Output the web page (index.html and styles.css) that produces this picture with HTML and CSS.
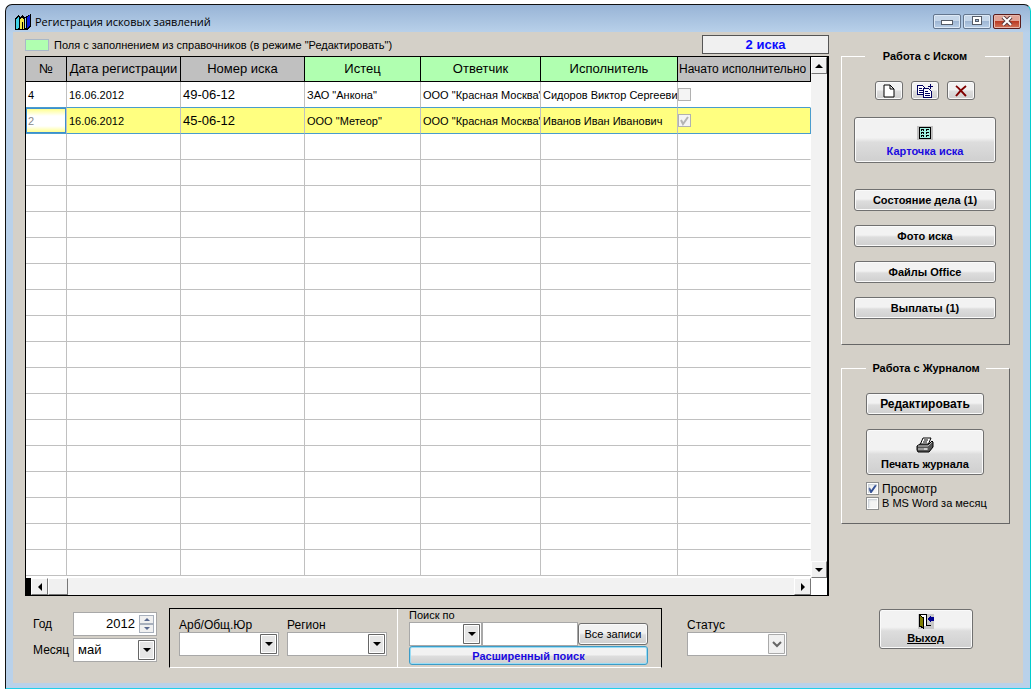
FILE: index.html
```
<!DOCTYPE html>
<html lang="ru">
<head>
  <meta charset="UTF-8">
  <meta name="viewport" content="width=device-width, initial-scale=1.0">
  <title>Регистрация исковых заявлений</title>
  <link rel="stylesheet" href="styles.css">
</head>
<body>
  <div class="window">
    <header class="titlebar">
      <svg class="app__icon" width="16" height="16" viewBox="0 0 16 16" shape-rendering="crispEdges">
        <path d="M0 5l3-4 3 2v13H0z" fill="#000"/>
        <path d="M1 5l2-2 1 1v10l-3 1z" fill="#3fd0e8"/>
        <path d="M4 5l3-4 3 3v12H4z" fill="#000"/>
        <path d="M5 6l2-3 2 3v9H8V8H7v7H5z" fill="#f4e84a"/>
        <path d="M10 3l6-3v12l-4 4h-2z" fill="#000"/>
        <path d="M12 3l3-2v11l-3 2z" fill="#0a1fe0"/>
        <path d="M10 4h1v10h-1z" fill="#9fd8f0"/>
      </svg>
      <h1 class="titlebar__text">Регистрация исковых заявлений</h1>
      <div class="titlebar__buttons">
        <button class="win__btn" type="button" aria-label="Свернуть">
          <svg width="12" height="10" viewBox="0 0 12 10"><rect x=".5" y="4.500" width="11" height="4" fill="#fff" stroke="#555c68"/></svg>
        </button>
        <button class="win__btn" type="button" aria-label="Развернуть">
          <svg width="12" height="10" viewBox="0 0 12 10"><rect x="1.500" y=".5" width="9" height="8" fill="#fff" stroke="#555c68"/><rect x="4.500" y="3.500" width="3" height="2" fill="#9db6d3" stroke="#555c68"/></svg>
        </button>
        <button class="win__btn win__btn--close" type="button" aria-label="Закрыть">
          <svg width="12" height="10" viewBox="0 0 12 10"><path d="M2 1l8 8M10 1l-8 8" stroke="#5b3c40" stroke-width="4"/><path d="M2 1l8 8M10 1l-8 8" stroke="#fff" stroke-width="2"/></svg>
        </button>
      </div>
    </header>

    <main class="client">
      <section class="journal">
        <div class="journal__top">
          <span class="swatch"></span>
          <p class="hint">Поля с заполнением из справочников (в режиме "Редактировать")</p>
          <output class="count">2 иска</output>
        </div>

        <div class="grid">
          <table class="claims">
            <colgroup>
              <col class="col-num"><col class="col-date"><col class="col-claim"><col class="col-plaintiff"><col class="col-defendant"><col class="col-executor"><col>
            </colgroup>
            <thead>
              <tr>
                <th>№</th>
                <th>Дата регистрации</th>
                <th>Номер иска</th>
                <th class="lookup">Истец</th>
                <th class="lookup">Ответчик</th>
                <th class="lookup">Исполнитель</th>
                <th class="started">Начато исполнительно</th>
              </tr>
            </thead>
            <tbody>
              <tr class="before">
                <td>4</td>
                <td>16.06.2012</td>
                <td class="big">49-06-12</td>
                <td>ЗАО "Анкона"</td>
                <td>ООО "Красная Москва"</td>
                <td>Сидоров Виктор Сергееви</td>
                <td class="tick"><input class="check" type="checkbox" aria-label="Начато исполнительное, иск 4" disabled></td>
              </tr>
              <tr class="selected">
                <td class="current">2</td>
                <td>16.06.2012</td>
                <td class="big">45-06-12</td>
                <td>ООО "Метеор"</td>
                <td>ООО "Красная Москва"</td>
                <td>Иванов Иван Иванович</td>
                <td class="tick"><input class="check" type="checkbox" aria-label="Начато исполнительное, иск 2" checked disabled></td>
              </tr>
              <tr><td></td><td></td><td></td><td></td><td></td><td></td><td></td></tr>
              <tr><td></td><td></td><td></td><td></td><td></td><td></td><td></td></tr>
              <tr><td></td><td></td><td></td><td></td><td></td><td></td><td></td></tr>
              <tr><td></td><td></td><td></td><td></td><td></td><td></td><td></td></tr>
              <tr><td></td><td></td><td></td><td></td><td></td><td></td><td></td></tr>
              <tr><td></td><td></td><td></td><td></td><td></td><td></td><td></td></tr>
              <tr><td></td><td></td><td></td><td></td><td></td><td></td><td></td></tr>
              <tr><td></td><td></td><td></td><td></td><td></td><td></td><td></td></tr>
              <tr><td></td><td></td><td></td><td></td><td></td><td></td><td></td></tr>
              <tr><td></td><td></td><td></td><td></td><td></td><td></td><td></td></tr>
              <tr><td></td><td></td><td></td><td></td><td></td><td></td><td></td></tr>
              <tr><td></td><td></td><td></td><td></td><td></td><td></td><td></td></tr>
              <tr><td></td><td></td><td></td><td></td><td></td><td></td><td></td></tr>
              <tr><td></td><td></td><td></td><td></td><td></td><td></td><td></td></tr>
              <tr><td></td><td></td><td></td><td></td><td></td><td></td><td></td></tr>
              <tr><td></td><td></td><td></td><td></td><td></td><td></td><td></td></tr>
              <tr><td></td><td></td><td></td><td></td><td></td><td></td><td></td></tr>
            </tbody>
          </table>
          <div class="vscroll">
            <button class="scroll__btn" type="button" aria-label="Вверх"><svg width="8" height="4" viewBox="0 0 8 4"><path d="M0 4l4-4 4 4z"/></svg></button>
            <button class="scroll__btn" type="button" aria-label="Вниз"><svg width="8" height="4" viewBox="0 0 8 4"><path d="M0 0l4 4 4-4z"/></svg></button>
          </div>
          <div class="hscroll">
            <button class="scroll__btn" type="button" aria-label="Влево"><svg width="4" height="8" viewBox="0 0 4 8"><path d="M4 0L0 4l4 4z"/></svg></button>
            <span class="thumb"></span>
            <button class="scroll__btn scroll__btn--end" type="button" aria-label="Вправо"><svg width="4" height="8" viewBox="0 0 4 8"><path d="M0 0l4 4-4 4z"/></svg></button>
          </div>
        </div>

        <form class="filters">
          <div class="period">
            <label for="year">Год</label>
            <div class="spin">
              <input id="year" class="spin__input" type="text" value="2012">
              <div class="spin__buttons">
                <button type="button" aria-label="Больше"><svg width="6" height="3" viewBox="0 0 6 3"><path d="M0 3l3-3 3 3z"/></svg></button>
                <button type="button" aria-label="Меньше"><svg width="6" height="3" viewBox="0 0 6 3"><path d="M0 0l3 3 3-3z"/></svg></button>
              </div>
            </div>
            <label for="month">Месяц</label>
            <select id="month" class="select"><option>май</option></select>
          </div>

          <div class="panel">
            <div class="panel__part panel__part--court">
              <div class="field">
                <label for="court">Арб/Общ.Юр</label>
                <select id="court" class="select"><option></option></select>
              </div>
              <div class="field">
                <label for="region">Регион</label>
                <select id="region" class="select"><option></option></select>
              </div>
            </div>
            <div class="panel__part panel__part--search">
              <label class="small" for="search-by">Поиск по</label>
              <div class="search">
                <select id="search-by" class="select"><option></option></select>
                <input class="search__text" type="text" aria-label="Текст поиска">
                <button class="btn btn--plain" type="button">Все записи</button>
              </div>
              <button class="btn btn--advanced" type="button">Расширенный поиск</button>
            </div>
          </div>

          <div class="field status">
            <label for="status">Статус</label>
            <select id="status" class="select" disabled><option></option></select>
          </div>
        </form>
      </section>

      <aside class="side">
        <fieldset class="group group--claim">
          <legend>Работа с Иском</legend>
          <div class="tools">
            <button class="btn" type="button" aria-label="Новый иск">
              <svg width="12" height="14" viewBox="0 0 12 14"><path d="M1 1h6l4 4v8H1zM7 1v4h4" fill="#fff" stroke="#000"/></svg>
            </button>
            <button class="btn" type="button" aria-label="Копировать иск">
              <svg width="17" height="14" viewBox="0 0 17 14" shape-rendering="crispEdges">
                <path d="M.5 1.500h5l3 3v6h-8z" fill="#fff" stroke="#000060"/>
                <path d="M2 4.500h3M2 6.500h4M2 8.500h4" stroke="#000060"/>
                <path d="M6.500 4.500h5l3 3v6h-8z" fill="#fff" stroke="#000060"/>
                <path d="M8 7.500h3M8 9.500h5M8 11.500h5" stroke="#000060"/>
                <path d="M11 2.500h5M13.500 0v5" stroke="#000060"/>
              </svg>
            </button>
            <button class="btn" type="button" aria-label="Удалить иск">
              <svg width="12" height="12" viewBox="0 0 12 12"><path d="M1 1c3 2 6 6 10 10M11 1C7 4 4 7 1 11" fill="none" stroke="#800000" stroke-width="2"/></svg>
            </button>
          </div>
          <button class="btn btn--tall btn--blue" type="button">
            <svg width="16" height="14" viewBox="0 0 16 14" shape-rendering="crispEdges">
              <path d="M0 0h16v14H0z" fill="#c0c0c0"/>
              <path d="M2 1h12v12H2z" fill="#000"/>
              <path d="M3 2h10v10H3z" fill="#a0f0e0"/>
              <path d="M4 3h3v2H4zM4 6h3v2H4zM4 9h3v2H4zM9 3h3v2H9zM9 6h3v2H9zM9 9h3v2H9z" fill="#000"/>
              <path d="M5 4h1M5 7h1M5 10h1M10 4h2M10 7h2M10 10h2" stroke="#a0f0e0"/>
            </svg>
            Карточка иска
          </button>
          <div class="stack">
            <button class="btn" type="button">Состояние дела (1)</button>
            <button class="btn" type="button">Фото иска</button>
            <button class="btn" type="button">Файлы Office</button>
            <button class="btn" type="button">Выплаты (1)</button>
          </div>
        </fieldset>

        <fieldset class="group group--journal">
          <legend>Работа с Журналом</legend>
          <div class="stack">
            <button class="btn btn--edit" type="button">Редактировать</button>
            <button class="btn btn--tall" type="button">
              <svg width="18" height="16" viewBox="0 0 18 16">
                <path d="M4 8l3-7h8l-3 7z" fill="#fff" stroke="#000"/>
                <path d="M8 3h4M7 5h4" stroke="#000"/>
                <path d="M1 9l3-2h9l3-3 1 1v5l-4 5H2l-1-2z" fill="#555" stroke="#000"/>
                <path d="M2 9h10l4-4" fill="none" stroke="#bbb"/>
                <path d="M2 12h10" stroke="#999" stroke-width="2"/>
                <path d="M8 12h3" stroke="#fff"/>
              </svg>
              Печать журнала
            </button>
          </div>
          <div class="options">
            <label class="option"><input class="check" type="checkbox" checked>Просмотр</label>
            <label class="option small"><input class="check" type="checkbox">В MS Word за месяц</label>
          </div>
        </fieldset>

        <button class="btn btn--exit" type="button">
          <svg width="16" height="15" viewBox="0 0 16 15" shape-rendering="crispEdges">
            <path d="M0 0h16v15H0z" fill="#c8c8c8"/>
            <path d="M1.500 12.500V.5h7v11h4" fill="#fff" stroke="#000"/>
            <path d="M1.500 1l4 3v10.500l-4-3z" fill="#808000" stroke="#000"/>
            <path d="M9 5l4-4v2h3v4h-3v2z" fill="#000090"/>
          </svg>
          <u>Выход</u>
        </button>
      </aside>
    </main>
  </div>
</body>
</html>
```
FILE: styles.css
```
:root {
  --face: #d4d0c8;
  --frame: #b9d1ea;
  --line: #c0c0c0;
  --lookup: #b0ffb0;
  --link: #0a0aff;
  --row: 26px;
}
* {
  box-sizing: border-box;
}
body {
  margin: 0;
  min-height: 100vh;
  display: flex;
  padding: 4px 3px 0 5px;
  background: #fff;
  font-family: "Liberation Sans", Arial, sans-serif;
  font-size: 12px;
  line-height: 14px;
  color: #000;
}
button, input, select {
  font: inherit;
  color: inherit;
  margin: 0;
}
svg {
  display: block;
  flex: none;
}
.window {
  flex: 1;
  display: flex;
  flex-direction: column;
  padding: 0 7px 5px 7px;
  border: 1px solid #111;
  border-right-color: #0cc;
  border-bottom-color: #20d0e8;
  border-radius: 7px 7px 0 0;
  background: linear-gradient(#98b4d6, var(--frame) 28px);
}

/* title bar */
.titlebar {
  display: flex;
  align-items: center;
  height: 27px;
  padding: 0 2px;
}
.titlebar__text {
  flex: 1;
  margin: 0 0 0 4px;
  padding-top: 6px;
  font-family: "Open Sans", "Noto Sans", sans-serif;
  font-size: 11px;
  font-weight: 400;
}
.app__icon {
  margin-top: 6px;
}
.titlebar__buttons {
  display: flex;
  gap: 2px;
  padding-top: 5px;
}
.win__btn {
  display: flex;
  align-items: center;
  justify-content: center;
  width: 28px;
  height: 15px;
  padding: 0;
  border: 1px solid #64768e;
  border-radius: 2px;
  background: linear-gradient(#c6d7ea 45%, #9fb7d4 50%, #b9cfe8);
  box-shadow: inset 0 0 0 1px #dde9f6;
}
.win__btn--close {
  border-color: #5a1c1c;
  background: linear-gradient(#e2a497 45%, #bb3b24 50%, #d2745a);
  box-shadow: inset 0 0 0 1px #e8b8ac;
}

.client {
  flex: 1;
  display: grid;
  grid-template-columns: 1fr 169px;
  gap: 12px;
  padding: 3px 13px 14px 12px;
  background: var(--face);
}
.journal {
  min-width: 0;
}
.journal__top {
  display: flex;
  align-items: center;
  height: 21px;
  padding-bottom: 2px;
}
.swatch {
  width: 24px;
  height: 12px;
  border: 1px solid #a8b8c8;
  background: var(--lookup);
}
.hint {
  flex: 1;
  margin: 0 0 0 5px;
  font-size: 11px;
}
.count {
  width: 127px;
  height: 19px;
  border: 1px solid #555;
  background: #f0f0f0;
  color: var(--link);
  font-size: 13px;
  font-weight: 700;
  line-height: 18px;
  text-align: center;
}

/* journal table */
.grid {
  display: grid;
  grid-template-columns: 1fr 16px;
  grid-template-rows: auto 17px;
  border: 1px solid #000;
  border-right-width: 2px;
  background: #fff;
}
.claims {
  width: 100%;
  table-layout: fixed;
  border-spacing: 0;
  margin-bottom: 2px;
}
.col-num { width: 41px; }
.col-date { width: 114px; }
.col-claim { width: 124px; }
.col-plaintiff { width: 116px; }
.col-defendant { width: 120px; }
.col-executor { width: 137px; }
.claims th {
  height: 25px;
  padding: 0;
  border-right: 1px solid #000;
  border-bottom: 1px solid #000;
  background: var(--line);
  font-size: 13px;
  font-weight: 400;
  white-space: nowrap;
  overflow: hidden;
}
.claims th.lookup {
  background: var(--lookup);
}
.claims th.started {
  padding-left: 1px;
  font-size: 12px;
  text-align: left;
}
.claims td {
  height: var(--row);
  padding: 0 0 0 2px;
  border-right: 1px solid var(--line);
  border-bottom: 1px solid var(--line);
  font-size: 11px;
  white-space: nowrap;
  overflow: hidden;
}
.claims td:last-child {
  border-right-color: #fff;
}
.claims td.big {
  font-size: 13px;
}
.claims td.tick {
  padding-left: 0;
}
.claims .before td, .claims .selected td {
  border-bottom-color: #4a9ccc;
}
.claims .selected td {
  background: #ffff80;
}
.claims .selected td:last-child {
  border-right-color: #4a9ccc;
}
.claims td.current {
  background: linear-gradient(#ffff80, #fff 8px, #fff 18px, #ffff80);
  box-shadow: inset 0 0 0 1px #3c8fd0;
  color: #888;
}
.check {
  appearance: none;
  display: block;
  flex: none;
  width: 13px;
  height: 13px;
  border: 1px solid #8e8f8f;
  background: #f4f4f4 center / 11px no-repeat;
  box-shadow: inset 0 0 0 1px #fff, inset 2px 2px 2px #c4ccd4;
}
.check:checked {
  background-image: url("data:image/svg+xml,%3Csvg xmlns='http://www.w3.org/2000/svg' viewBox='0 0 11 11'%3E%3Cpath d='M2 5l2 4 5-7' fill='none' stroke='%23324f94' stroke-width='2'/%3E%3C/svg%3E");
}
.check:disabled {
  border-color: #b1b1b1;
  box-shadow: none;
}
.check:checked:disabled {
  background-image: url("data:image/svg+xml,%3Csvg xmlns='http://www.w3.org/2000/svg' viewBox='0 0 11 11'%3E%3Cpath d='M2 5l2 4 5-7' fill='none' stroke='%23b4b4b4' stroke-width='2'/%3E%3C/svg%3E");
}
.vscroll, .hscroll {
  display: flex;
  background: #f2f2f2;
}
.vscroll {
  flex-direction: column;
  justify-content: space-between;
}
.hscroll {
  border-left: 5px solid #000;
}
.scroll__btn, .thumb {
  display: flex;
  align-items: center;
  justify-content: center;
  width: 17px;
  height: 17px;
  padding: 0;
  border: 1px solid;
  border-color: #fff #777 #777 #fff;
  background: #f0f0f0;
}
.vscroll .scroll__btn {
  width: 16px;
}
.thumb {
  width: 20px;
}
.scroll__btn--end {
  margin-left: auto;
}

/* filters under the table */
.filters {
  display: flex;
  align-items: flex-start;
  padding-top: 12px;
}
.period {
  display: grid;
  grid-template-columns: 40px 84px;
  gap: 2px 0;
  align-items: center;
  padding: 4px 12px 0 8px;
}
.spin, #month {
  font-size: 13px;
}
.select, .spin, .search__text {
  height: 24px;
  border: 1px solid #a8a8a8;
  border-radius: 0;
  background: #fff;
}
.select {
  appearance: none;
  width: 100%;
  padding: 0 20px 0 4px;
  background: #fff right 1px center / 17px 20px no-repeat url("data:image/svg+xml,%3Csvg xmlns='http://www.w3.org/2000/svg' width='17' height='20'%3E%3Cpath d='M.5.5h16v19H.5z' fill='%23e6e6e6' stroke='%23666'/%3E%3Cpath d='M1.500 1.500h14v17h-14z' fill='none' stroke='%23fff'/%3E%3Cpath d='M5 8h8l-4 4z'/%3E%3C/svg%3E");
}
.select:disabled {
  opacity: 1;
  background-image: url("data:image/svg+xml,%3Csvg xmlns='http://www.w3.org/2000/svg' width='17' height='20'%3E%3Cpath d='M.5.5h16v19H.5z' fill='%23f0f0f0' stroke='%23aaa'/%3E%3Cpath d='M5 8l4 4 4-4' fill='none' stroke='%23666' stroke-width='2'/%3E%3C/svg%3E");
}
.spin {
  display: flex;
  align-items: center;
  padding-right: 2px;
}
.spin__input {
  flex: 1;
  min-width: 0;
  padding: 0 4px 0 0;
  border: 0;
  background: none;
  text-align: right;
}
.spin__buttons button {
  display: flex;
  align-items: center;
  justify-content: center;
  width: 15px;
  height: 9px;
  padding: 0;
  border: 1px solid #a8b0bc;
  background: #f0f0f0;
  fill: #5a6a90;
}
.panel {
  display: flex;
  width: 493px;
  border: 1px solid #000;
  border-bottom-color: #fff;
}
.panel__part--court {
  display: flex;
  gap: 8px;
  padding: 9px 10px 11px 9px;
  border-right: 1px solid #fff;
}
.field {
  display: flex;
  flex-direction: column;
  width: 100px;
}
.panel__part--search {
  flex: 1;
  display: flex;
  flex-direction: column;
  padding: 0 13px 0 11px;
}
.small {
  font-size: 11px;
  line-height: 13px;
}
.search {
  display: grid;
  grid-template-columns: 73px 1fr 70px;
}
.search__text {
  min-width: 0;
}
.status {
  margin-left: 25px;
  padding-top: 10px;
}

/* buttons */
.btn {
  display: flex;
  align-items: center;
  justify-content: center;
  height: 22px;
  padding: 0;
  border: 1px solid #707070;
  border-radius: 3px;
  background: linear-gradient(#f2f2f2 45%, #dddddd 55%, #cfcfcf);
  box-shadow: inset 0 0 0 1px #fafafa;
  font-size: 11px;
  font-weight: 700;
  white-space: nowrap;
}
.btn--tall, .btn--exit {
  flex-direction: column;
  gap: 4px;
  height: 46px;
  padding-top: 4px;
}
.btn--blue, .btn--advanced {
  color: #1a0ae0;
}
.btn--plain {
  align-self: center;
  font-weight: 400;
}
.btn--advanced {
  height: 19px;
  border-color: #3c9cc8;
  box-shadow: inset 0 0 0 1px #9adcf4;
}
.btn--edit {
  font-size: 12px;
}
.btn--exit {
  align-self: center;
  width: 94px;
  height: 40px;
  gap: 2px;
  margin: auto 0 20px;
  padding-top: 0;
}

/* right column */
.side {
  display: flex;
  flex-direction: column;
  padding-top: 14px;
}
.group {
  display: flex;
  flex-direction: column;
  min-width: 0;
  margin: 0 0 16px;
  border: 1px solid;
  border-color: #fff #666 #666 #fff;
}
.group legend {
  width: 120px;
  margin: 0 auto;
  padding: 0;
  font-size: 11px;
  font-weight: 700;
  text-align: center;
}
.group--claim {
  padding: 18px 13px 25px 12px;
}
.group--journal {
  padding: 18px 25px 12px 24px;
}
.tools {
  display: flex;
  justify-content: center;
  gap: 8px;
  margin-bottom: 17px;
}
.tools .btn {
  width: 28px;
  height: 19px;
}
.group .stack {
  display: flex;
  flex-direction: column;
  gap: 14px;
}
.group--claim .stack {
  margin-top: 26px;
}
.options {
  padding-top: 6px;
}
.option {
  display: flex;
  align-items: center;
  gap: 3px;
  height: 15px;
  white-space: nowrap;
}
```
